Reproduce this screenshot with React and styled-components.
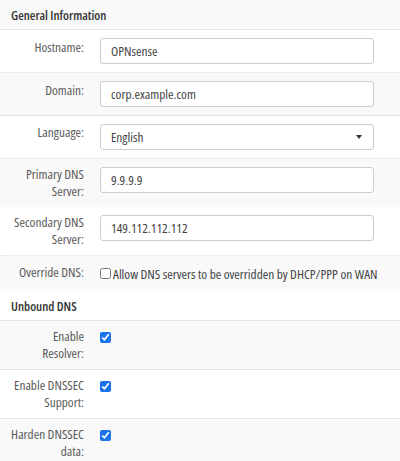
import React from "react";
import styled, { createGlobalStyle } from "styled-components";

const Global = createGlobalStyle`
  html, body { margin: 0; padding: 0; background: #fff; }
  body {
    font-family: "Open Sans", "Liberation Sans", sans-serif;
    font-size: 13.3px;
    font-stretch: 75%;
    color: #555;
  }
`;

const Page = styled.div`
  width: 400px;
  height: 461px;
  overflow: hidden;
  background: #fff;
`;

const Header = styled.div`
  height: 29px;
  display: flex;
  align-items: center;
  padding: 0 11px;
  font-weight: 600;
  font-size: 12.8px;
  color: #333;
  background: ${p => (p.$striped ? "#f9f9f9" : "#fff")};
  border-bottom: 1px solid #e5e5e5;
`;

const Row = styled.div`
  display: grid;
  grid-template-columns: 92px 1fr;
  background: ${p => (p.$striped ? "#f9f9f9" : "#fff")};
  border-top: ${p => (p.$border ? `1px ${p.$border} #e3e3e3` : "none")};
`;

const Label = styled.div`
  padding: ${p => (p.$pad ? p.$pad : "7px")} 8px 7px 8px;
  text-align: right;
  line-height: 17px;
  color: #5a5a5a;
  white-space: nowrap;
`;

const Cell = styled.div`
  padding: 8px 26px 8px 8px;
  display: flex;
  align-items: flex-start;
`;

const Input = styled.div`
  box-sizing: border-box;
  width: 100%;
  height: 26px;
  border: 1px solid #ccc;
  border-radius: 3px;
  background: #fff;
  padding: 0 10px;
  display: flex;
  align-items: center;
  justify-content: space-between;
  color: #444;
`;

const Caret = styled.span`
  width: 0;
  height: 0;
  border-left: 3px solid transparent;
  border-right: 3px solid transparent;
  border-top: 4px solid #333;
  margin-right: 1px;
`;

const Check = styled.input.attrs({ type: "checkbox" })`
  margin: 0;
  width: 11px;
  height: 11px;
  accent-color: #1a73e8;
  flex: none;
`;

const CheckWrap = styled.label`
  display: flex;
  align-items: center;
  gap: 2px;
  color: #444;
  white-space: nowrap;
  height: ${p => p.$h || "auto"};
  padding-top: ${p => p.$top || "0"};
`;

const TextField = ({ value, select }) => (
  <Input>
    <span>{value}</span>
    {select && <Caret />}
  </Input>
);

export default function App() {
  return (
    <Page>
      <Global />
      <Header $striped>General Information</Header>
      <Row>
        <Label $pad="9px">Hostname:</Label>
        <Cell><TextField value="OPNsense" /></Cell>
      </Row>
      <Row $striped $border="dotted">
        <Label $pad="9px">Domain:</Label>
        <Cell><TextField value="corp.example.com" /></Cell>
      </Row>
      <Row $border="solid">
        <Label $pad="8px">Language:</Label>
        <Cell><TextField value="English" select /></Cell>
      </Row>
      <Row $striped $border="dotted">
        <Label>Primary DNS<br />Server:</Label>
        <Cell><TextField value="9.9.9.9" /></Cell>
      </Row>
      <Row>
        <Label>Secondary DNS<br />Server:</Label>
        <Cell><TextField value="149.112.112.112" /></Cell>
      </Row>
      <Row $striped $border="dotted">
        <Label $pad="8px">Override DNS:</Label>
        <Cell>
          <CheckWrap $h="19px" $top="0">
            <Check />
            Allow DNS servers to be overridden by DHCP/PPP on WAN
          </CheckWrap>
        </Cell>
      </Row>
      <Header>Unbound DNS</Header>
      <Row $striped>
        <Label>Enable<br />Resolver:</Label>
        <Cell><CheckWrap $top="3px"><Check defaultChecked /></CheckWrap></Cell>
      </Row>
      <Row $border="solid">
        <Label>Enable DNSSEC<br />Support:</Label>
        <Cell><CheckWrap $top="3px"><Check defaultChecked /></CheckWrap></Cell>
      </Row>
      <Row $striped $border="solid">
        <Label>Harden DNSSEC<br />data:</Label>
        <Cell><CheckWrap $top="3px"><Check defaultChecked /></CheckWrap></Cell>
      </Row>
    </Page>
  );
}
